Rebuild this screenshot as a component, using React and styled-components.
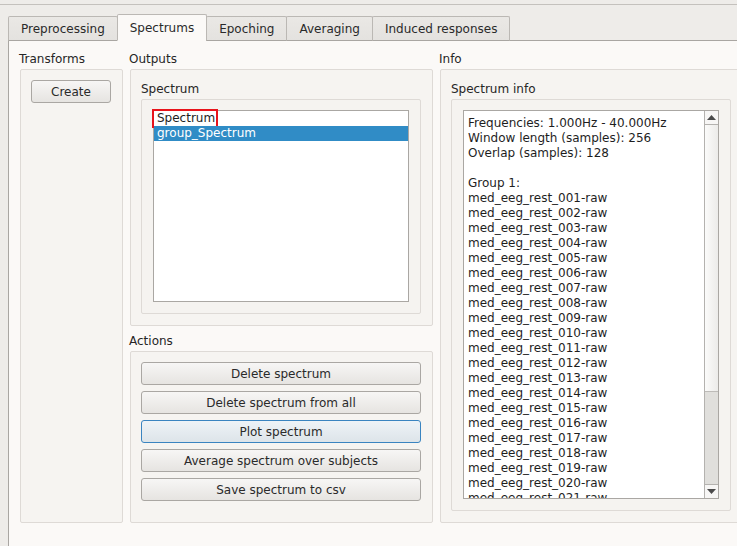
import React from "react";
import styled, { createGlobalStyle } from "styled-components";

const GlobalStyle = createGlobalStyle`
  html, body {
    margin: 0;
    padding: 0;
    background: #eeece9;
    overflow: hidden;
  }
  body {
    font-family: "DejaVu Sans", "Liberation Sans", sans-serif;
    font-size: 12px;
    color: #262626;
  }
`;

const Window = styled.div`
  width: 737px;
  height: 546px;
  overflow: hidden;
  border-top: 1px solid #c4c1bd;
  margin-top: 4px;
  box-sizing: border-box;
  padding-left: 8px;
  padding-top: 9px;
  display: flex;
  flex-direction: column;
`;

const TabBar = styled.div`
  display: flex;
  align-items: flex-end;
  height: 27px;
  position: relative;
  z-index: 1;
  margin-bottom: -1px;
`;

const Tab = styled.div`
  box-sizing: border-box;
  height: ${(p) => (p.$active ? "27px" : "25px")};
  padding: 0 12px;
  display: flex;
  align-items: center;
  justify-content: center;
  padding-top: ${(p) => (p.$active ? "0" : "1px")};
  border: 1px solid #bbb8b4;
  border-bottom: ${(p) => (p.$active ? "1px solid #fbf9f7" : "1px solid #a9a6a2")};
  margin-left: ${(p) => (p.$first ? "0" : "-1px")};
  border-radius: 2px 2px 0 0;
  background: ${(p) =>
    p.$active ? "#fbf9f7" : "linear-gradient(#eae8e5, #e4e2df)"};
  white-space: nowrap;
  color: #2a2a2a;
`;

const Pane = styled.div`
  flex: 1;
  min-height: 0;
  background: #fbf9f7;
  border-top: 1px solid #a9a6a2;
  border-left: 1px solid #a9a6a2;
  padding: 9px 0 0 10px;
  display: flex;
  align-items: flex-start;
  gap: 6px;
  box-sizing: border-box;
`;

const Column = styled.div`
  display: flex;
  flex-direction: column;
  width: ${(p) => p.$width}px;
  flex-shrink: 0;
`;

const Caption = styled.div`
  line-height: 18px;
  height: 16px;
  margin-top: ${(p) => p.$top || 0}px;
  margin-bottom: 3px;
`;

const GroupBox = styled.div`
  box-sizing: border-box;
  margin-left: 1px;
  height: ${(p) => p.$height}px;
  background: #f6f4f1;
  border: 1px solid #dedad6;
  border-radius: 2px;
  padding: 10px 11px 11px 10px;
  display: flex;
  flex-direction: column;
  gap: ${(p) => p.$gap || 0}px;
`;

const InnerBox = styled.div`
  box-sizing: border-box;
  flex: 1;
  min-height: 0;
  overflow: hidden;
  background: #f5f3f0;
  border: 1px solid #dedad6;
  border-radius: 2px;
  padding: 10px 11px 11px 11px;
  display: flex;
  flex-direction: column;
`;

const Button = styled.div`
  box-sizing: border-box;
  height: 23px;
  flex-shrink: 0;
  width: ${(p) => (p.$width ? `${p.$width}px` : "auto")};
  border: 1px solid ${(p) => (p.$focus ? "#3a84c0" : "#aaa7a3")};
  border-radius: 3px;
  background: ${(p) =>
    p.$focus
      ? "linear-gradient(#eef3f7, #dde4e9)"
      : "linear-gradient(#f7f6f5, #e6e4e1)"};
  display: flex;
  align-items: center;
  justify-content: center;
  color: #2a2a2a;
  white-space: nowrap;
`;

const ListView = styled.div`
  flex: 1;
  min-height: 0;
  background: #ffffff;
  border: 1px solid #aaa7a3;
  display: flex;
  flex-direction: column;
`;

const ListItem = styled.div`
  height: 15px;
  line-height: 15px;
  padding-left: 3px;
  background: ${(p) => (p.$selected ? "#308cc6" : "transparent")};
  color: ${(p) => (p.$selected ? "#ffffff" : "#1e1e1e")};
`;

const Marked = styled.span`
  display: inline-block;
  outline: 2px solid #e8141b;
  outline-offset: 0;
  margin-left: -3px;
  padding: 0 1px 0 3px;
  line-height: 15px;
`;

const TextView = styled.div`
  flex: 1;
  min-height: 0;
  background: #ffffff;
  border: 1px solid #aaa7a3;
  display: flex;
  overflow: hidden;
`;

const TextContent = styled.div`
  flex: 1;
  padding: 5px 0 0 4px;
  line-height: 15px;
  white-space: pre;
  overflow: hidden;
  color: #1e1e1e;
`;

const ScrollBar = styled.div`
  width: 14px;
  box-sizing: border-box;
  border-left: 1px solid #b4b2af;
  display: flex;
  flex-direction: column;
  background: linear-gradient(90deg, #fbfbfa, #ecebe9);
`;

const ArrowButton = styled.div`
  height: 13px;
  flex-shrink: 0;
  display: flex;
  align-items: center;
  justify-content: center;
  border-top: ${(p) => (p.$down ? "1px solid #b4b2af" : "none")};
  border-bottom: ${(p) => (p.$down ? "none" : "1px solid #b4b2af")};
  background: #f7f6f5;
`;

const Track = styled.div`
  flex: 1;
  display: flex;
  flex-direction: column;
  justify-content: flex-end;
`;

const Thumb = styled.div`
  height: 92px;
  background: #e0dfdc;
  border-top: 1px solid #bdbbb8;
`;

const Arrow = ({ down }) => (
  <svg width="9" height="5" viewBox="0 0 9 5">
    <path d={down ? "M0 0 H9 L4.5 5 Z" : "M0 5 H9 L4.5 0 Z"} fill="#4a4a4a" />
  </svg>
);

const tabs = ["Preprocessing", "Spectrums", "Epoching", "Averaging", "Induced responses"];
const actions = [
  "Delete spectrum",
  "Delete spectrum from all",
  "Plot spectrum",
  "Average spectrum over subjects",
  "Save spectrum to csv",
];

const subjects = Array.from(
  { length: 21 },
  (_, i) => `med_eeg_rest_${String(i + 1).padStart(3, "0")}-raw`
);

const infoText = [
  "Frequencies: 1.000Hz - 40.000Hz",
  "Window length (samples): 256",
  "Overlap (samples): 128",
  "",
  "Group 1:",
  ...subjects,
].join("\n");

export default function App() {
  return (
    <>
      <GlobalStyle />
      <Window>
        <TabBar>
          {tabs.map((t, i) => (
            <Tab key={t} $first={i === 0} $active={t === "Spectrums"}>
              {t}
            </Tab>
          ))}
        </TabBar>
        <Pane>
          <Column $width={104}>
            <Caption>Transforms</Caption>
            <GroupBox $height={454}>
              <Button $width={80}>Create</Button>
            </GroupBox>
          </Column>
          <Column $width={304}>
            <Caption>Outputs</Caption>
            <GroupBox $height={257}>
              <Caption>Spectrum</Caption>
              <InnerBox>
                <ListView>
                  <ListItem>
                    <Marked>Spectrum</Marked>
                  </ListItem>
                  <ListItem $selected>group_Spectrum</ListItem>
                </ListView>
              </InnerBox>
            </GroupBox>
            <Caption $top={6}>Actions</Caption>
            <GroupBox $height={172} $gap={6}>
              {actions.map((a) => (
                <Button key={a} $focus={a === "Plot spectrum"}>
                  {a}
                </Button>
              ))}
            </GroupBox>
          </Column>
          <Column $width={304}>
            <Caption>Info</Caption>
            <GroupBox $height={454}>
              <Caption>Spectrum info</Caption>
              <InnerBox>
                <TextView>
                  <TextContent>{infoText}</TextContent>
                  <ScrollBar>
                    <ArrowButton>
                      <Arrow />
                    </ArrowButton>
                    <Track>
                      <Thumb />
                    </Track>
                    <ArrowButton $down>
                      <Arrow down />
                    </ArrowButton>
                  </ScrollBar>
                </TextView>
              </InnerBox>
            </GroupBox>
          </Column>
        </Pane>
      </Window>
    </>
  );
}
